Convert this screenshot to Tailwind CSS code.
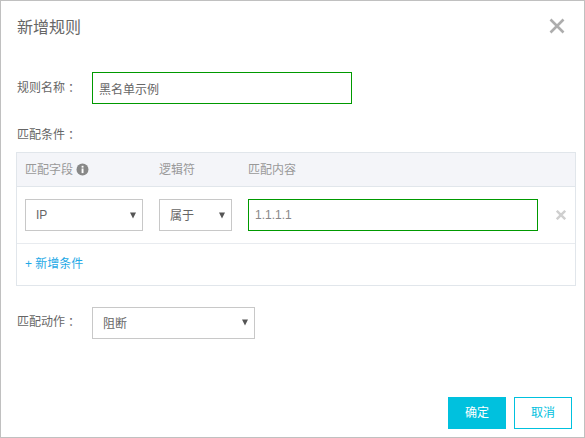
<!DOCTYPE html>
<html lang="zh">
<head>
<meta charset="utf-8">
<script src="https://cdn.jsdelivr.net/npm/@tailwindcss/browser@4"></script>
</head>
<body class="m-0">
<div class="w-[585px] h-[438px] box-border overflow-hidden border border-[#c0c0c0] bg-white text-[12px] text-[#666] font-['Liberation_Sans','Noto_Sans_CJK_SC',sans-serif] flex flex-col">
  <div class="flex items-center justify-between h-[53px] pl-4 pr-[19px] shrink-0">
    <h1 class="text-[16px] leading-[53px] font-normal text-[#666]">新增规则</h1>
    <svg width="16" height="16" viewBox="0 0 16 16" class="mb-[3px]"><path d="M1.5 1.5 14.5 14.5M14.5 1.5 1.5 14.5" stroke="#adadad" stroke-width="2.6" fill="none"/></svg>
  </div>
  <div class="flex items-center mt-[18px] pl-4 h-8">
    <label class="w-[75px] shrink-0">规则名称<span class="ml-[3px]">：</span></label>
    <div class="w-[260px] h-8 box-border border border-[#090] pl-[6px] pt-[2px] leading-[30px]">黑名单示例</div>
  </div>
  <div class="pl-4 mt-[22px] h-[18px] leading-[18px]">匹配条件<span class="ml-[3px]">：</span></div>
  <div class="ml-[15px] mt-[8px] w-[560px] h-[134px] box-border border border-[#e1e6eb] flex flex-col">
    <div class="h-[34px] shrink-0 box-border bg-[#f4f5f9] border-b border-[#e1e6eb] text-[#999] flex items-center pl-2">
      <div class="w-[134px] flex items-center gap-[3px]">匹配字段
        <svg width="13" height="13" viewBox="0 0 13 13"><circle cx="6.5" cy="6.5" r="6" fill="#888"/><rect x="5.6" y="5.5" width="1.9" height="4.6" fill="#fff"/><rect x="5.6" y="2.8" width="1.9" height="1.8" fill="#fff"/></svg>
      </div>
      <div class="w-[89px]">逻辑符</div>
      <div>匹配内容</div>
    </div>
    <div class="h-[57px] shrink-0 box-border border-b border-[#e8ebef] flex items-center pl-2">
      <div class="w-[118px] h-8 box-border border border-[#c8c8c8] flex items-center justify-between pl-[10px] pr-[6px] text-[#666]">IP
        <svg width="6" height="7" viewBox="0 0 6 7"><path d="M0 .5H6L3 6.5Z" fill="#555"/></svg>
      </div>
      <div class="w-[73px] h-8 box-border border border-[#c8c8c8] ml-4 flex items-center justify-between pl-[10px] pr-[6px]"><span class="pt-[2px]">属于</span>
        <svg width="6" height="7" viewBox="0 0 6 7"><path d="M0 .5H6L3 6.5Z" fill="#555"/></svg>
      </div>
      <div class="w-[290px] h-8 box-border border border-[#090] ml-4 pl-[6px] leading-[30px] text-[#888]">1.1.1.1</div>
      <svg width="10" height="10" viewBox="0 0 10 10" class="ml-[18px]"><path d="M.8 .8 9.2 9.2M9.2 .8 .8 9.2" stroke="#cfcfcf" stroke-width="2.4" fill="none"/></svg>
    </div>
    <div class="flex-1 pl-2 pt-[11px] text-[#1fa9e6] leading-[18px]">+ 新增条件</div>
  </div>
  <div class="flex items-center mt-[21px] pl-4 h-8">
    <label class="w-[75px] shrink-0 mb-[2px]">匹配动作<span class="ml-[3px]">：</span></label>
    <div class="w-[163px] h-8 box-border border border-[#c8c8c8] flex items-center justify-between pl-[10px] pr-[6px]"><span class="pt-[2px]">阻断</span>
      <svg width="6" height="7" viewBox="0 0 6 7" class="mb-[2px]"><path d="M0 .5H6L3 6.5Z" fill="#555"/></svg>
    </div>
  </div>
  <div class="mt-auto mb-2 pr-3 flex justify-end gap-2">
    <button class="w-[58px] h-8 bg-[#00c1de] text-white text-[12px]">确定</button>
    <button class="w-[58px] h-8 box-border border border-[#00c1de] bg-white text-[#00c1de] text-[12px]">取消</button>
  </div>
</div>
</body>
</html>
